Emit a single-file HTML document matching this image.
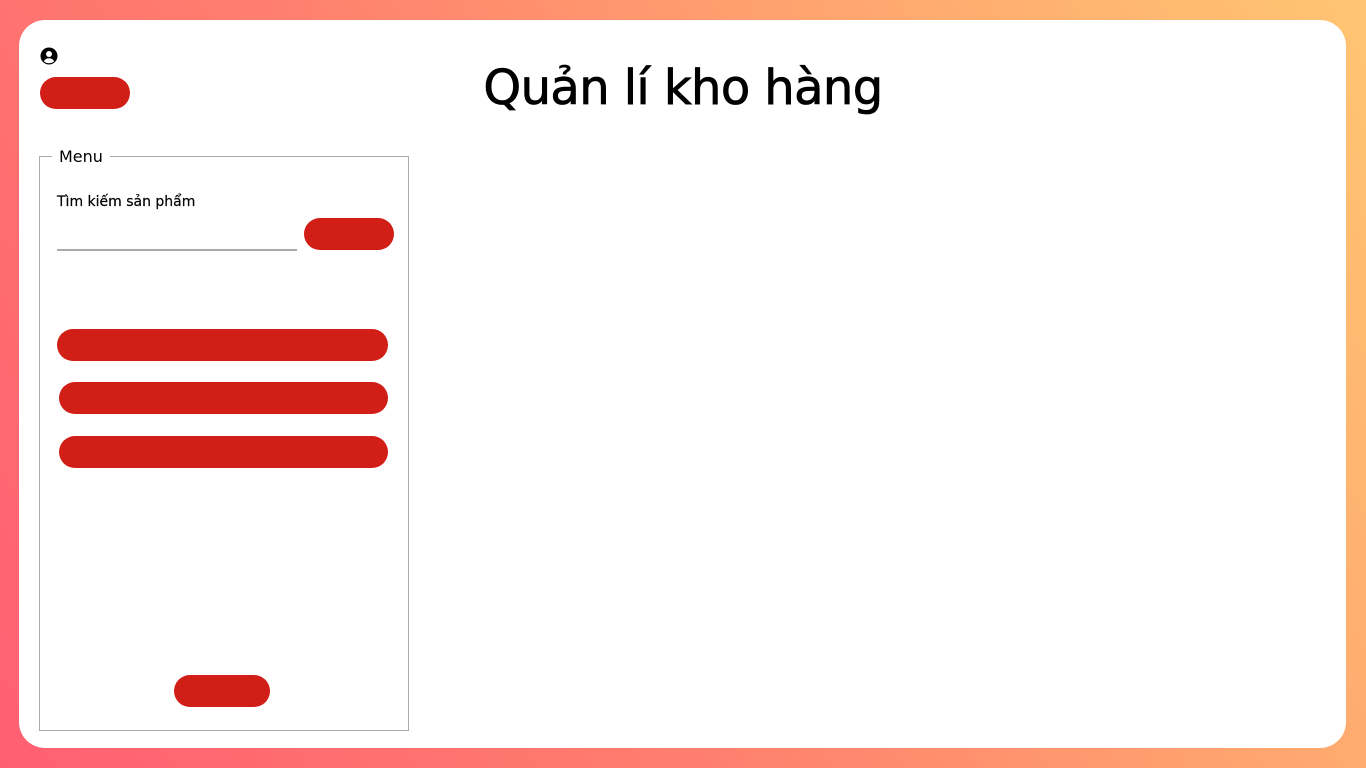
<!DOCTYPE html>
<html><head><meta charset="utf-8"><style>
*{margin:0;padding:0;box-sizing:border-box}
html,body{width:1366px;height:768px;overflow:hidden}
body{background:linear-gradient(60deg,#ff5f72 0%,#ff7f6e 40%,#ffa56f 70%,#ffc572 100%);font-family:"Liberation Sans","Noto Sans CJK SC",sans-serif;position:relative}
.card{position:absolute;left:19px;top:20px;width:1327px;height:728px;background:#fff;border-radius:26px}
.pill{position:absolute;background:#d11f17;border-radius:16px;height:32px}
h1{position:absolute;left:0;width:1366px;top:60px;text-align:center;font-size:48px;font-weight:normal;color:#000;font-family:"DejaVu Sans",sans-serif;letter-spacing:-0.6px;-webkit-text-stroke:0.8px #000}
.fs{position:absolute;left:39px;top:156px;width:370px;height:575px;border:1px solid #aaa}
.leg{position:absolute;left:52px;top:147px;background:#fff;padding:0 7px;font-size:16px;font-family:"DejaVu Sans",sans-serif}
.lbl{position:absolute;left:57px;top:194px;font-size:14px;font-family:"DejaVu Sans",sans-serif;-webkit-text-stroke:0.2px #000}
.inp{position:absolute;left:57px;top:249px;width:240px;height:2px;background:#aaa}
</style></head><body>
<div class="card"></div>
<svg style="position:absolute;left:40px;top:47px" width="18" height="18" viewBox="0 0 18 18"><circle cx="9" cy="9" r="8.5" fill="#000"/><circle cx="9" cy="7" r="3" fill="#fff"/><path d="M3.8 14.2c1.2-2 3-2.9 5.2-2.9s4 .9 5.2 2.9c-1.4 1.3-3.2 2-5.2 2s-3.8-.7-5.2-2z" fill="#fff"/></svg>
<div class="pill" style="left:40px;top:77px;width:90px"></div>
<h1>Quản lí kho hàng</h1>
<div class="fs"></div>
<div class="leg">Menu</div>
<div class="lbl">Tìm kiếm sản phẩm</div>
<div class="inp"></div>
<div class="pill" style="left:304px;top:218px;width:90px"></div>
<div class="pill" style="left:57px;top:329px;width:331px"></div>
<div class="pill" style="left:59px;top:382px;width:329px"></div>
<div class="pill" style="left:59px;top:436px;width:329px"></div>
<div class="pill" style="left:174px;top:675px;width:96px"></div>
</body></html>
